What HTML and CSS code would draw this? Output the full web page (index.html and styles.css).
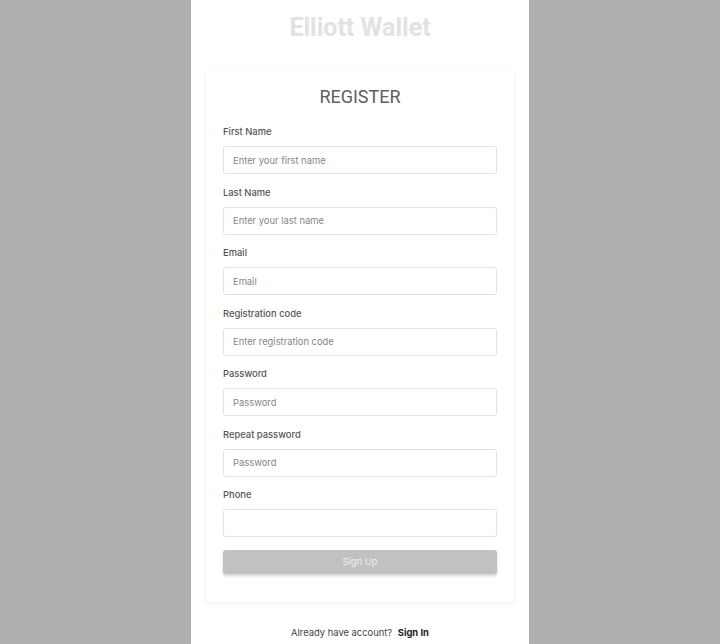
FILE: index.html
```html
<!DOCTYPE html>
<html lang="en">
<head>
    <meta charset="UTF-8">
    <meta name="viewport" content="width=device-width, initial-scale=1.0">
    <title>Elliott Wallet - Register</title>
    <link rel="stylesheet" href="styles.css">
</head>
<body>
    <div class="page">
        <h1 class="brand">Elliott Wallet</h1>
        <div class="card">
            <h2 class="card-title">REGISTER</h2>
            <form class="register-form">
                <div class="field">
                    <label for="firstName">First Name</label>
                    <input type="text" id="firstName" placeholder="Enter your first name">
                </div>
                <div class="field">
                    <label for="lastName">Last Name</label>
                    <input type="text" id="lastName" placeholder="Enter your last name">
                </div>
                <div class="field">
                    <label for="email">Email</label>
                    <input type="email" id="email" placeholder="Email">
                </div>
                <div class="field">
                    <label for="regCode">Registration code</label>
                    <input type="text" id="regCode" placeholder="Enter registration code">
                </div>
                <div class="field">
                    <label for="password">Password</label>
                    <input type="password" id="password" placeholder="Password">
                </div>
                <div class="field">
                    <label for="password2">Repeat password</label>
                    <input type="password" id="password2" placeholder="Password">
                </div>
                <div class="field">
                    <label for="phone">Phone</label>
                    <input type="tel" id="phone">
                </div>
                <button type="submit" class="btn-submit" disabled>Sign Up</button>
            </form>
        </div>
        <p class="switch">Already have account? <a href="#">Sign In</a></p>
    </div>
</body>
</html>
```

FILE: styles.css
```css
/* page background */
body {
    margin: 0;
    background: #afafaf;
    font-family: 'Inter', 'Liberation Sans', sans-serif;
    color: #333;
}

/* centered white column */
.page {
    width: 338px;
    min-height: 100vh;
    margin: 0 auto;
    background: #fff;
    padding: 12px 15px 0;
    box-sizing: border-box;
}

.brand {
    margin: 0 0 26px;
    font-family: 'Roboto', sans-serif;
    font-weight: 700;
    font-size: 25px;
    line-height: 32px;
    color: #e2e2e2;
    text-align: center;
}

/* register card */
.card {
    background: #fff;
    border-radius: 4px;
    box-shadow: 0 1px 4px rgba(0,0,0,0.08);
    padding: 16px 17px 28px;
}

.card-title {
    margin: 0 0 18px;
    font-family: 'Roboto', sans-serif;
    font-weight: 400;
    font-size: 18px;
    line-height: 22px;
    color: #5b6066;
    text-align: center;
}

.register-form {
    display: flex;
    flex-direction: column;
    gap: 12.5px;
}

.field {
    display: flex;
    flex-direction: column;
    gap: 8px;
}

.field label {
    font-size: 9.4px;
    line-height: 12px;
    font-weight: 500;
    color: #555;
}

.field input {
    height: 28px;
    box-sizing: border-box;
    border: 1px solid #e2e2e2;
    border-radius: 3px;
    padding: 0 9px;
    font-family: inherit;
    font-size: 9.4px;
    color: #333;
    outline: none;
}

.field input::placeholder {
    color: #858585;
}

.btn-submit {
    height: 24px;
    border: none;
    border-radius: 3px;
    background: #c1c1c1;
    color: #efefef;
    font-family: inherit;
    font-size: 9.4px;
    box-shadow: 0 2px 3px rgba(0,0,0,0.18);
}

/* sign in link */
.switch {
    margin: 25px 0 0;
    text-align: center;
    font-size: 9.4px;
    color: #444;
}

.switch a {
    margin-left: 3px;
    color: #222;
    font-weight: 700;
    text-decoration: none;
}
```
